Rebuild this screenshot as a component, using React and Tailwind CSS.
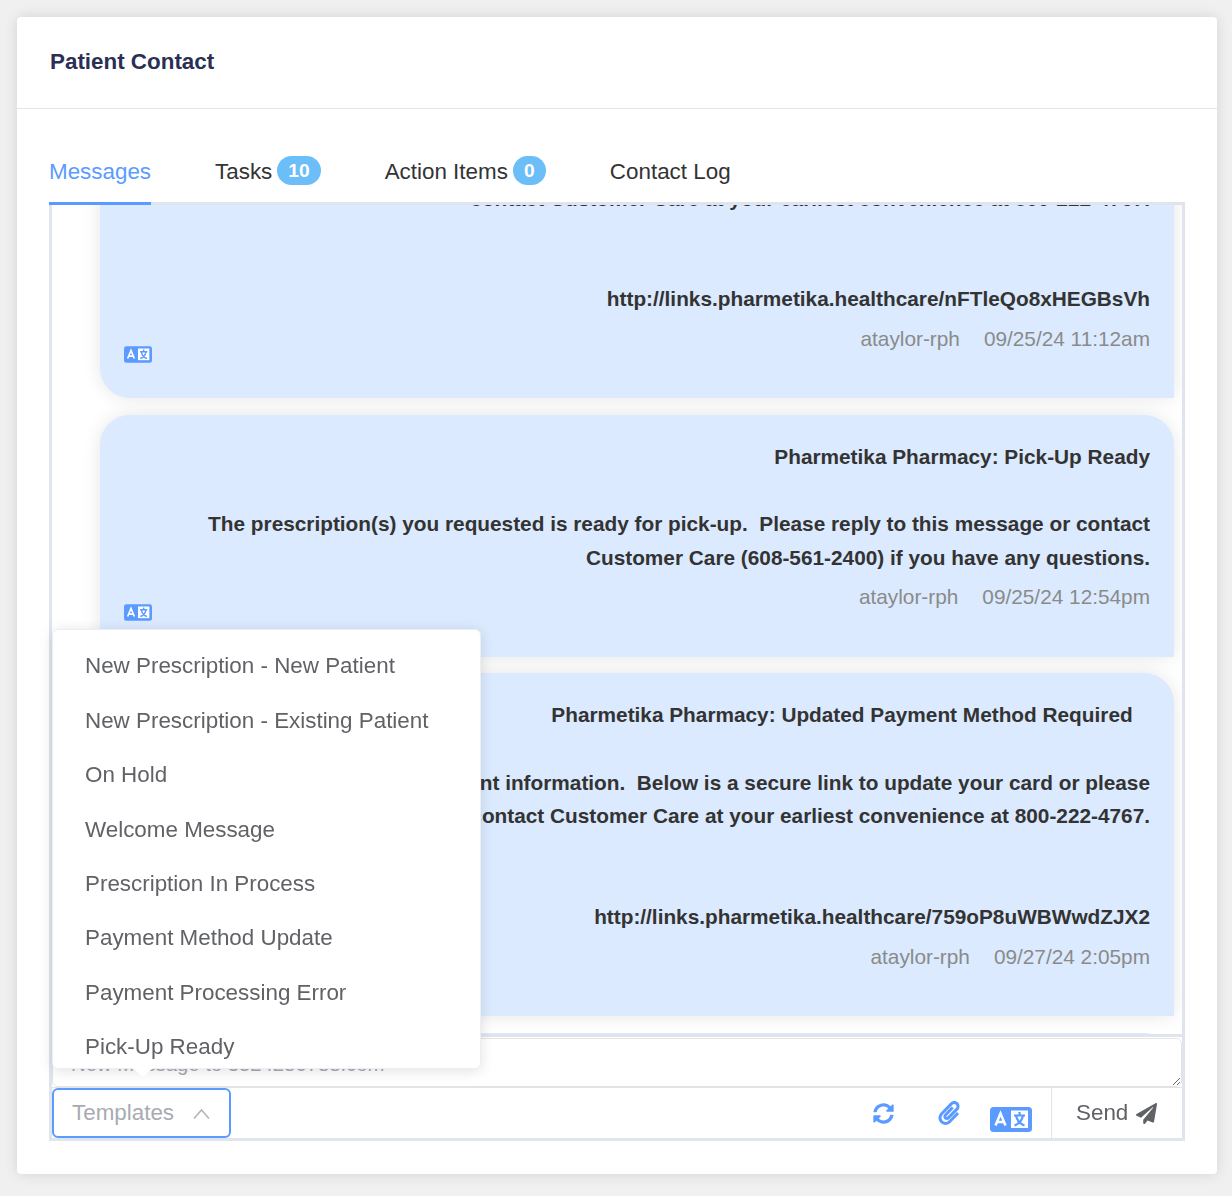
import React from "react";
import { FaSyncAlt, FaPaperclip, FaPaperPlane } from "react-icons/fa";

const templates = [
  "New Prescription - New Patient",
  "New Prescription - Existing Patient",
  "On Hold",
  "Welcome Message",
  "Prescription In Process",
  "Payment Method Update",
  "Payment Processing Error",
  "Pick-Up Ready",
];

const messages = [
  {
    text: "Pharmetika Pharmacy: Updated Payment Method Required   \n\nWe need updated payment information.  Below is a secure link to update your card or please\ncontact Customer Care at your earliest convenience at 800-222-4767.\n\n\nhttp://links.pharmetika.healthcare/nFTleQo8xHEGBsVh",
    user: "ataylor-rph",
    time: "09/25/24 11:12am",
  },
  {
    text: "Pharmetika Pharmacy: Pick-Up Ready\n\nThe prescription(s) you requested is ready for pick-up.  Please reply to this message or contact\nCustomer Care (608-561-2400) if you have any questions.",
    user: "ataylor-rph",
    time: "09/25/24 12:54pm",
  },
  {
    text: "Pharmetika Pharmacy: Updated Payment Method Required   \n\nWe need updated payment information.  Below is a secure link to update your card or please\ncontact Customer Care at your earliest convenience at 800-222-4767.\n\n\nhttp://links.pharmetika.healthcare/759oP8uWBWwdZJX2",
    user: "ataylor-rph",
    time: "09/27/24 2:05pm",
  },
];

const TranslateIcon = ({ className }) => (
  <svg viewBox="0 0 42 25" className={className}>
    <rect width="42" height="25" rx="3.5" fill="#5b9bff" />
    <rect x="21" y="3.5" width="17" height="17.5" fill="#fff" />
    <path d="M5.500 18.500 10.500 6.500 15.500 18.500M7.500 15h6" fill="none" stroke="#fff" strokeWidth="2.500" />
    <path d="M29.500 5v3M24 8.500h11M33 8.500c-1 5-4 8.500-8.500 10M26 8.500c1 5 4 8.500 8.500 10" fill="none" stroke="#5b9bff" strokeWidth="2.200" />
  </svg>
);

const Bubble = ({ text, user, time }) => (
  <div className="ml-12 mr-2 shrink-0 rounded-t-[30px] rounded-bl-[30px] bg-[#dbeafe] pt-[25px] pr-6 pl-6 pb-[44.5px] shadow-[0_0_18px_rgba(0,0,0,0.1)]">
    <p className="whitespace-pre-wrap text-right text-[20.8px] leading-[33.6px] font-bold text-[#333333]">{text}</p>
    <div className="flex justify-between">
      <TranslateIcon className="-mb-[9px] h-[17px] w-[28px] self-end" />
      <div className="flex gap-6 pt-[8px] text-[20.8px] leading-[30px] text-[#8a8a8a]">
        <span>{user}</span>
        <span>{time}</span>
      </div>
    </div>
  </div>
);

const Tab = ({ label, badge, active }) => (
  <div className={`relative z-10 flex h-[48px] items-start pt-[2px] text-[22.4px] leading-[26px] ${active ? "border-b-[3px] border-[#5b9bff] text-[#5b9bff]" : "text-[#333333]"}`}>
    <span>{label}</span>
    {badge !== undefined && (
      <span className="-mt-[3px] ml-[5px] flex h-[29px] min-w-[33px] items-center justify-center rounded-full bg-[#6cbef9] px-[11px] text-[19.2px] font-bold text-white">
        {badge}
      </span>
    )}
  </div>
);

export default function App() {
  return (
    <div className="min-h-[1196px] bg-[#f0f0f0] py-[17px] pl-[17px] pr-[15px] font-['Liberation_Sans',Arial,sans-serif]">
      <div className="h-[1157px] rounded-[4px] bg-white shadow-[0_0_14px_rgba(0,0,0,0.12)]">
        <div className="flex h-[92px] items-center border-b border-[#e5e5e5] pb-[2px] pl-[33px] text-[22.4px] font-bold text-[#2b2f54]">
          Patient Contact
        </div>
        <div className="px-8 pt-[48px]">
          <div className="flex gap-16">
            <Tab label="Messages" active />
            <Tab label="Tasks" badge={10} />
            <Tab label="Action Items" badge={0} />
            <Tab label="Contact Log" />
          </div>
          <div className="relative -mt-[3px] h-[939px] border-[3px] border-[#dfe4ee] bg-white">
            <div className="h-[832px] overflow-hidden border-b-[3px] border-[#dfe4ee]">
              <div className="-mt-[149.2px] flex flex-col gap-[16.5px]">
                {messages.map((m) => (
                  <Bubble key={m.time} {...m} />
                ))}
                <div className="ml-12 mr-2 h-[60px] shrink-0 rounded-t-[30px] bg-[#dbeafe]" />
              </div>
            </div>
            <textarea
              placeholder="New Message to 3524286788.com"
              className="mt-px block h-[49px] w-full rounded-[6px] border border-[#e3e3e6] bg-white px-[18px] py-[10px] text-[20.3px] placeholder:text-[#a8abb2]"
            />
            <div className="flex h-[51px] items-stretch border-t border-[#e3e3e6]">
              <button className="flex w-[179px] items-center gap-[19px] rounded-[6px] border-2 border-[#5b9bff] pl-[18px] text-[22.4px] text-[#a8abb2]">
                Templates
                <svg viewBox="0 0 17 11" className="h-[11px] w-[17px]" fill="none" stroke="#b3b5ba" strokeWidth="1.6">
                  <path d="M1 10.500 8.500 2 16 10.500" />
                </svg>
              </button>
              <div className="ml-auto flex items-center pr-[19px]">
                <FaSyncAlt className="h-[21px] w-[21px] text-[#5b9bff]" />
                <FaPaperclip className="ml-[44px] h-[24px] w-[22px] text-[#5b9bff]" />
                <TranslateIcon className="ml-[30px] mt-[12px] h-[25px] w-[42px]" />
              </div>
              <div className="flex w-[131px] items-center gap-2 border-l border-[#e3e3e6] pl-6 text-[22.4px] text-[#606266]">
                Send
                <FaPaperPlane className="h-[21px] w-[21px]" />
              </div>
            </div>
            <div className="absolute bottom-[69px] left-0 h-[440px] w-[429px] rounded-[6px] border border-[#ebeef5] bg-white shadow-[0_2px_14px_rgba(0,0,0,0.12)]">
              <div className="h-full overflow-hidden px-8 pt-[9px]">
                {templates.map((t) => (
                  <div key={t} className="flex h-[54.4px] shrink-0 items-center text-[22.4px] text-[#606266]">
                    {t}
                  </div>
                ))}
              </div>
              <div className="absolute -bottom-[9px] left-[80px] h-0 w-0 border-x-[10px] border-t-[9px] border-x-transparent border-t-white" />
            </div>
          </div>
        </div>
      </div>
    </div>
  );
}
